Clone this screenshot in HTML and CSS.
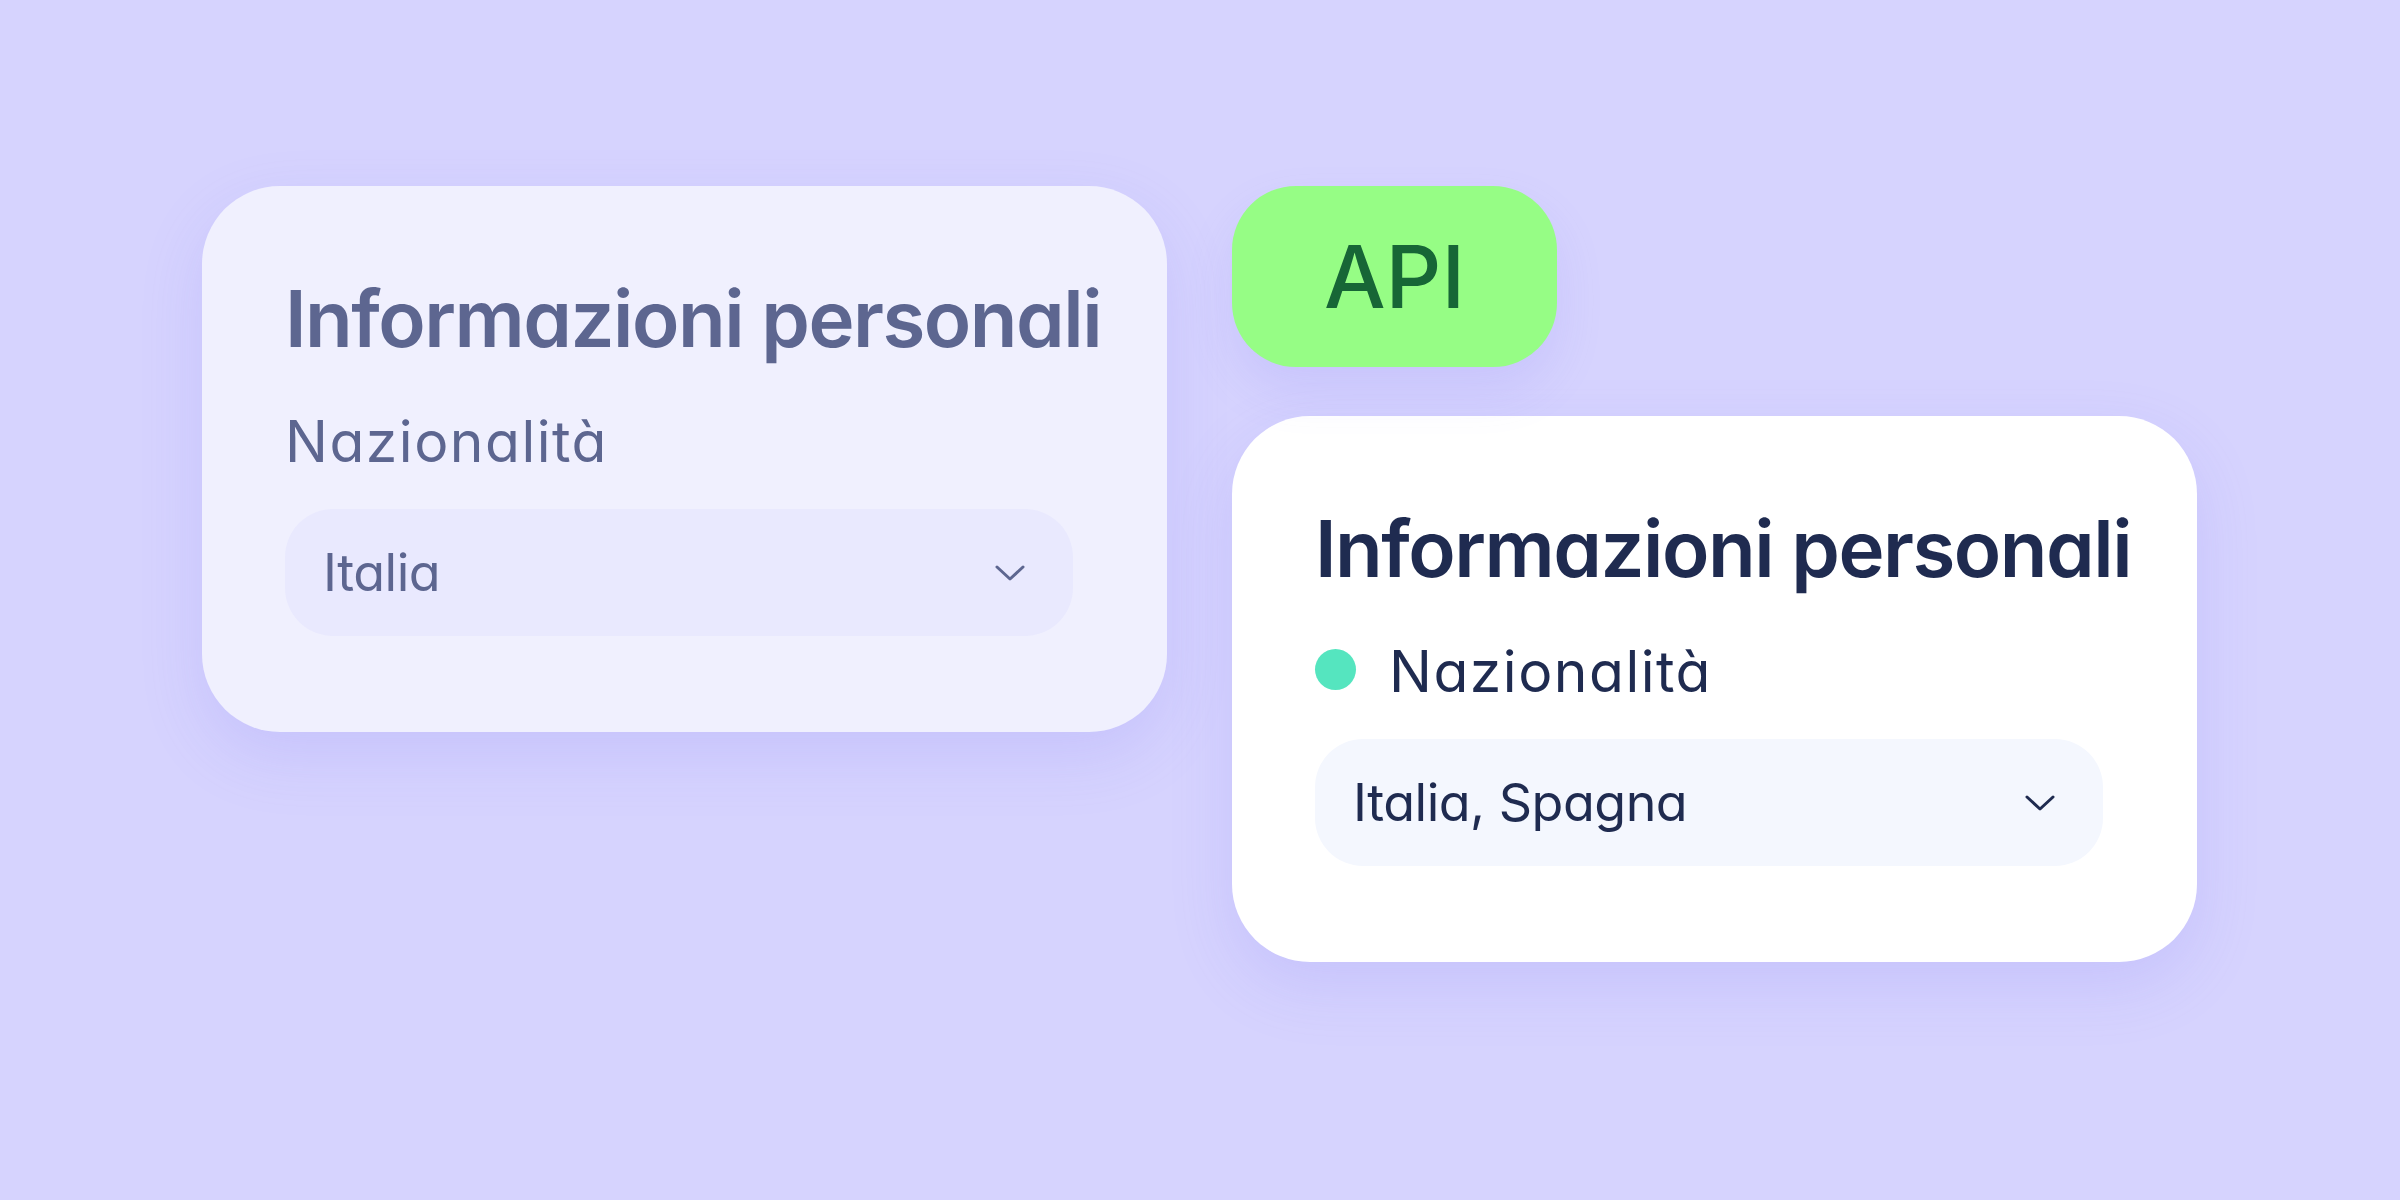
FILE: index.html
```html
<!DOCTYPE html>
<html lang="it">
<head>
    <meta charset="UTF-8">
    <meta name="viewport" content="width=device-width, initial-scale=1.0">
    <title>Informazioni personali - API</title>
    <link rel="stylesheet" href="styles.css">
</head>
<body>
    <main class="scene">
        <section class="card card-muted">
            <h2 class="card-title">Informazioni personali</h2>
            <div class="field-label">Nazionalità</div>
            <div class="select">
                <span class="select-value">Italia</span>
                <svg class="chevron" width="30" height="16" viewBox="0 0 30 16"><polyline points="2,2 15,14 28,2" fill="none" stroke="currentColor" stroke-width="3" stroke-linecap="round" stroke-linejoin="round"/></svg>
            </div>
        </section>

        <div class="stack">
            <div class="badge">API</div>
            <section class="card card-active">
                <h2 class="card-title">Informazioni personali</h2>
                <div class="field-label"><span class="dot"></span>Nazionalità</div>
                <div class="select">
                    <span class="select-value">Italia, Spagna</span>
                    <svg class="chevron" width="30" height="16" viewBox="0 0 30 16"><polyline points="2,2 15,14 28,2" fill="none" stroke="currentColor" stroke-width="3" stroke-linecap="round" stroke-linejoin="round"/></svg>
                </div>
            </section>
        </div>
    </main>
</body>
</html>
```

FILE: styles.css
```css
body {
    margin: 0;
    min-height: 100vh;
    background: #d6d3fe;
    font-family: Inter, "Noto Sans", sans-serif;
    font-feature-settings: "cv11";
}
.scene {
    display: flex;
    align-items: flex-start;
    gap: 65px;
    padding: 186px 0 0 202px;
}
.stack {
    display: flex;
    flex-direction: column;
    align-items: flex-start;
    gap: 49px;
}
.card {
    width: 965px;
    box-sizing: border-box;
    padding: 94px 0 96px 83px;
    border-radius: 78px;
    box-shadow: 0 24px 64px rgba(120, 110, 240, 0.16);
}
.card-muted {
    background: #f0f0fe;
    color: #5d6690;
}
.card-active {
    background: #ffffff;
    color: #1f2b50;
}
.card-title {
    margin: 0;
    font-size: 78px;
    line-height: 78px;
    font-weight: 600;
    letter-spacing: -1.5px;
}
.field-label {
    display: flex;
    align-items: center;
    margin-top: 56px;
    height: 55px;
    font-size: 57px;
    line-height: 55px;
    letter-spacing: 1.5px;
}
.dot {
    width: 41px;
    height: 41px;
    margin: -5px 33px 0 0;
    border-radius: 50%;
    background: #55e5bf;
}
.select {
    display: flex;
    align-items: center;
    justify-content: space-between;
    box-sizing: border-box;
    width: 788px;
    height: 127px;
    margin-top: 40px;
    padding: 0 48px 0 38px;
    border-radius: 48px;
    font-size: 52px;
    letter-spacing: -0.5px;
}
.card-muted .select {
    background: #e9e9fe;
}
.card-active .select {
    background: #f4f7fe;
}
.chevron {
    display: block;
}
.badge {
    position: relative;
    z-index: 1;
    display: flex;
    align-items: center;
    justify-content: center;
    width: 325px;
    height: 181px;
    border-radius: 64px;
    background: #96fd85;
    color: #176636;
    font-size: 87px;
    font-weight: 500;
    box-shadow: 0 24px 48px rgba(120, 110, 240, 0.14);
}
```
